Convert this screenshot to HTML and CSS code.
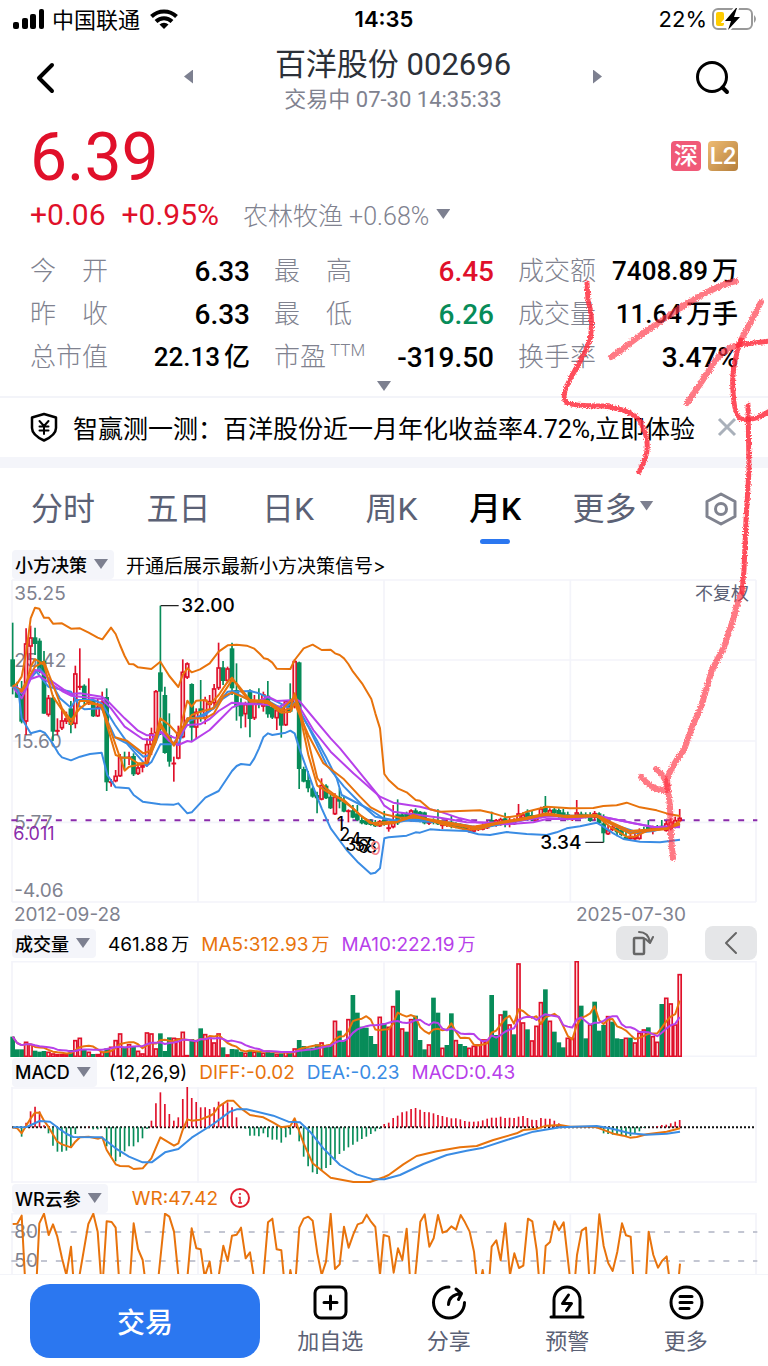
FILE: index.html
```html
<!doctype html>
<html lang="zh-CN">

<head>
  <meta charset="utf-8">
  <meta name="viewport" content="width=device-width, initial-scale=1">
  <title>百洋股份 002696</title>
  <link rel="stylesheet" href="styles.css">
</head>

<body>
  <div class="status">
    <svg width="34" height="20" viewBox="0 0 34 20">
      <rect x="1" y="13" width="6" height="7" rx="2" />
      <rect x="10" y="9" width="6" height="11" rx="2" />
      <rect x="18" y="5" width="6" height="15" rx="2" />
      <rect x="27" y="0" width="5" height="20" rx="2" />
    </svg>
    <span class="carrier">中国联通</span>
    <svg width="28" height="20" viewBox="0 0 28 20">
      <path d="M1.500 7.500A18 18 0 0 1 26.500 7.500" fill="none" stroke="#000" stroke-width="4" />
      <path d="M6 12.500A11.500 11.500 0 0 1 22 12.500" fill="none" stroke="#000" stroke-width="4" />
      <path d="M14 20L9.500 15.500A6.500 6.500 0 0 1 18.500 15.500Z" />
    </svg>
    <span class="time">14:35</span>
    <span class="battery">22%
      <svg width="46" height="24" viewBox="0 0 46 24">
        <rect x="1" y="2" width="39" height="20" rx="5" fill="none" stroke="#999" stroke-width="2" />
        <path d="M42 8q4 4 0 8z" fill="#999" />
        <rect x="4" y="5" width="8" height="14" rx="2" fill="#fc0" />
        <path d="M24 1L13 14h6l-3 9 12-13h-6l3-9z" stroke="#fff" stroke-width="4" />
        <path d="M24 1L13 14h6l-3 9 12-13h-6l3-9z" />
      </svg>
    </span>
  </div>

  <header class="nav">
    <button class="icon-btn" aria-label="返回">
      <svg width="32" height="32" viewBox="0 0 32 32" class="line">
        <path d="M22 3L9 16l13 13" stroke-width="4" />
      </svg>
    </button>
    <button class="icon-btn" aria-label="上一只"><i class="tri left"></i></button>
    <div class="title">
      <h1>百洋股份 002696</h1>
      <p>交易中 07-30 14:35:33</p>
    </div>
    <button class="icon-btn" aria-label="下一只"><i class="tri right"></i></button>
    <button class="icon-btn search" aria-label="搜索">
      <svg width="36" height="36" viewBox="0 0 36 36" class="line">
        <circle cx="17" cy="17" r="14.500" stroke-width="3" />
        <path d="M27.500 27.500L32 32" stroke-width="4" />
      </svg>
    </button>
  </header>

  <section class="quote">
    <div class="price">
      <strong>6.39</strong>
      <span class="badge sz">深</span>
      <span class="badge l2">L2</span>
    </div>
    <div class="change">
      <span class="up">+0.06</span>
      <span class="up">+0.95%</span>
      <span class="sector">农林牧渔 +0.68%</span>
      <i class="tri down"></i>
    </div>
    <dl class="stats">
      <div><dt>今　开</dt><dd>6.33</dd></div>
      <div><dt>最　高</dt><dd class="up">6.45</dd></div>
      <div><dt>成交额</dt><dd class="unit">7408.89<b>万</b></dd></div>
      <div><dt>昨　收</dt><dd>6.33</dd></div>
      <div><dt>最　低</dt><dd class="down-text">6.26</dd></div>
      <div><dt>成交量</dt><dd class="unit">11.64<b>万手</b></dd></div>
      <div><dt>总市值</dt><dd class="unit">22.13<b>亿</b></dd></div>
      <div><dt>市盈<sup>TTM</sup></dt><dd>-319.50</dd></div>
      <div><dt>换手率</dt><dd>3.47%</dd></div>
    </dl>
    <div class="expand"><i class="tri down"></i></div>
  </section>

  <div class="notice">
    <svg width="30" height="30" viewBox="0 0 30 30" class="line">
      <path d="M15 2L27 5.500V16q0 7-12 12.500Q3 23 3 16V5.500Z" stroke-width="2.500" />
      <path d="M10.500 9l4.500 5 4.500-5M15 14v8M10.500 14.500h9M10.500 18.500h9" stroke-width="2" />
    </svg>
    <a href="#">智赢测一测：百洋股份近一月年化收益率4.72%,立即体验</a>
    <button class="icon-btn" aria-label="关闭">
      <svg width="20" height="20" viewBox="0 0 20 20">
        <path d="M2 2l16 16M18 2L2 18" stroke="#a9b0ba" stroke-width="3" />
      </svg>
    </button>
  </div>

  <nav class="tabs">
    <a href="#">分时</a>
    <a href="#">五日</a>
    <a href="#">日K</a>
    <a href="#">周K</a>
    <a href="#" class="active">月K</a>
    <a href="#">更多<i class="tri down small"></i></a>
    <button class="icon-btn" aria-label="设置">
      <svg width="32" height="34" viewBox="0 0 32 34" class="line grey">
        <path d="M16 2L30 9.500V24.500L16 32L2 24.500V9.500Z" stroke-width="3" />
        <circle cx="16" cy="17" r="5.500" stroke-width="3" />
      </svg>
    </button>
  </nav>

  <div class="bar">
    <button class="tag">小方决策<i class="tri down"></i></button>
    <a href="#" class="hint">开通后展示最新小方决策信号&gt;</a>
  </div>
  <!-- chart units: 3 per css pixel -->
  <svg class="chart" id="kline" viewBox="0 12 2304 978">
    <path class="grid" d="M36 15H2268M36 255H2268M36 498H2268M36 742H2268M36 981H2268M36 15V981M594 15V981M1152 15V981M1711 15V981M2268 15V981" />
    <g class="axis">
      <text x="43" y="76">35.25</text>
      <text x="43" y="275">25.42</text>
      <text x="43" y="518">15.60</text>
      <text x="43" y="763">5.77</text>
      <text x="43" y="966">-4.06</text>
    </g>
    <text class="cost" x="40" y="795">6.011</text>
    <text class="adjust" x="2085" y="76">不复权</text>
    <path d="M34 736H2272" stroke="#8a2bab" stroke-width="6" stroke-dasharray="18 26.500" />
    <g id="candles"></g>
    <g id="lines"></g>
    <path d="M482 92h54M1756 802h55" stroke="#222" stroke-width="4" />
    <text class="mark" x="544" y="112">32.00</text>
    <text class="mark" x="1621" y="821">3.34</text>
    <g class="count">
      <text x="1010" y="766">1</text>
      <text x="1018" y="798">2</text>
      <text x="1036" y="829">3</text>
      <text x="1050" y="813">4</text>
      <text x="1063" y="829">5</text>
      <text x="1073" y="835">6</text>
      <text x="1085" y="829">7</text>
      <text x="1098" y="835">8</text>
      <text x="1110" y="841" class="last">9</text>
    </g>
  </svg>
  <div class="dates"><span>2012-09-28</span><span>2025-07-30</span></div>

  <div class="bar tall">
    <button class="tag">成交量<i class="tri down"></i></button>
    <span class="val">461.88<small>万</small></span>
    <span class="val orange">MA5:312.93<small>万</small></span>
    <span class="val purple">MA10:222.19<small>万</small></span>
    <span class="tools">
      <button aria-label="横屏">
        <svg width="24" height="26" viewBox="0 0 24 26" class="line dark">
          <rect x="4" y="8" width="10" height="16" rx="1" stroke-width="2.500" />
          <path d="M9 2Q18 2 20 12M15.500 9l4.500 4 3-6" stroke-width="2" />
        </svg>
      </button>
      <button aria-label="收起">
        <svg width="24" height="26" viewBox="0 0 24 26" class="line dark">
          <path d="M17 3L7 13l10 10" stroke-width="2" />
        </svg>
      </button>
    </span>
  </div>
  <svg class="chart" viewBox="0 108 2304 288">
    <path class="grid" d="M36 110H2268M36 394H2268M36 108V396M594 108V396M1152 108V396M1711 108V396M2268 108V396" />
    <g id="volume"></g>
  </svg>

  <div class="bar">
    <button class="tag">MACD<i class="tri down"></i></button>
    <span class="val">(12,26,9)</span>
    <span class="val orange">DIFF:-0.02</span>
    <span class="val blue">DEA:-0.23</span>
    <span class="val purple">MACD:0.43</span>
  </div>
  <svg class="chart" viewBox="0 486 2304 288">
    <path class="grid" d="M36 489H2268M36 771H2268M36 486V774M594 486V774M1152 486V774M1711 486V774M2268 486V774" />
    <path d="M36 607H2268" stroke="#111" stroke-width="6" stroke-dasharray="6 6" />
    <g id="macd"></g>
  </svg>

  <div class="bar">
    <button class="tag">WR云参<i class="tri down"></i></button>
    <span class="val orange wr">WR:47.42</span>
    <svg width="20" height="20" viewBox="0 0 20 20">
      <circle cx="10" cy="10" r="9" fill="none" stroke="#e02030" stroke-width="2" />
      <path d="M10 5v2M8.500 9.500H10v5M8 15h4" fill="none" stroke="#e02030" stroke-width="1.500" />
    </svg>
  </div>
  <svg class="chart" viewBox="0 864 2304 183">
    <path class="grid" d="M36 866H2268M36 864V1047M594 864V1047M1152 864V1047M1711 864V1047M2268 864V1047" />
    <path d="M34 921H2272M34 1008H2272" stroke="#c3c6d2" stroke-width="6" stroke-dasharray="18 26.500" />
    <g class="axis">
      <text x="43" y="940">80</text>
      <text x="43" y="1027">50</text>
    </g>
    <g id="wr"></g>
  </svg>

  <footer class="actions">
    <button class="trade">交易</button>
    <a href="#">
      <svg width="36" height="36" viewBox="0 0 36 36" class="line">
        <rect x="3" y="3" width="31" height="31" rx="6" stroke-width="3" />
        <path d="M18.500 12v13M12 18.500h13" stroke-width="3" />
      </svg>
      加自选
    </a>
    <a href="#">
      <svg width="36" height="36" viewBox="0 0 36 36" class="line">
        <path d="M18 3A15.500 15.500 0 1 0 33.500 18.500" stroke-width="3" />
        <path d="M17.500 20.500Q18 11 30 9.500M25 5l5.500 4.500-3 6" stroke-width="3" />
      </svg>
      分享
    </a>
    <a href="#">
      <svg width="36" height="36" viewBox="0 0 36 36" class="line">
        <path d="M2 33h32M5 33V16a13 13 0 0 1 26 0V33" stroke-width="3" />
        <path d="M19.500 11l-6 8.500h9l-5 7" stroke-width="3" />
      </svg>
      预警
    </a>
    <a href="#">
      <svg width="36" height="36" viewBox="0 0 36 36" class="line">
        <circle cx="18.500" cy="18.500" r="15.500" stroke-width="3" />
        <path d="M12 12.500h12M12 18.500h12M12 24.500h9" stroke-width="3" />
      </svg>
      更多
    </a>
  </footer>

  <!-- red pen notes on top of everything -->
  <svg class="pen" viewBox="0 0 768 1366">
    <filter id="rough" x="-10%" y="-10%" width="120%" height="120%">
      <feTurbulence type="fractalNoise" baseFrequency=".7" numOctaves="2" result="n" />
      <feDisplacementMap in="SourceGraphic" in2="n" scale="4" xChannelSelector="R" yChannelSelector="G" />
    </filter>
    <g filter="url(#rough)">
      <path d="M587 283L588 300Q593 317 591 333Q590 345 574 372Q560 396 566 402Q570 406 604 406Q634 410 641 423Q651 442 645 459L639 472" />
      <path class="soft" d="M736 281Q711 287 674 312T624 348L611 357" />
      <path class="soft" d="M761 302Q752 320 741 340" />
      <path d="M741 340Q731 368 733 390Q734 415 741 419Q752 422 770 411" />
      <path d="M770 341L738 345" />
      <path class="soft" d="M738 345Q722 349 713 364T687 403" />
      <path d="M748 405L749 470L746 520L744 570L742 592" />
      <path class="soft" d="M741 594Q736 606 734 617L724 647L712 670L701 707L692 727L684 750Q671 766 667 780L670 807L671 837L673 858" />
      <path class="soft" d="M641 777Q654 792 667 790M656 769Q663 773 667 785" />
    </g>
  </svg>

  <script src="chart.js"></script>
</body>

</html>
```
FILE: styles.css
```css
* {
  box-sizing: border-box;
}

body {
  margin: 0;
  position: relative;
  background: #fff;
  color: #000;
  font-family: Roboto, "Noto Sans CJK SC", sans-serif;
  overflow-x: hidden;
}

h1, p, dl, dd {
  margin: 0;
  font-weight: 400;
}

a {
  color: inherit;
  text-decoration: none;
}

button {
  font: inherit;
  color: inherit;
  border: 0;
  padding: 0;
  background: none;
}

svg {
  display: block;
  flex: none;
}

.line {
  fill: none;
  stroke: #000;
  stroke-linecap: round;
  stroke-linejoin: round;
}

.line.grey { stroke: #80838f; }
.line.dark { stroke: #666; }

.tri {
  display: inline-block;
  flex: none;
  width: 14px;
  height: 10px;
  background: #7d8090;
}

.tri.down { clip-path: polygon(0 0, 100% 0, 50% 100%); }
.tri.left { width: 9px; height: 14px; clip-path: polygon(100% 0, 100% 100%, 0 50%); }
.tri.right { width: 9px; height: 14px; clip-path: polygon(0 0, 100% 50%, 0 100%); }
.tri.small { margin-left: 3px; }

.up { color: #e0102a; }
.down-text { color: #078c59; }
.orange { color: #e8730c; }
.purple { color: #b740ea; }
.blue { color: #3a8ce4; }

/* status bar */
.status {
  display: grid;
  grid-template-columns: auto auto 1fr auto 1fr;
  align-items: center;
  height: 38px;
  padding: 0 10px 0 12px;
  font-family: Inter, "Noto Sans CJK SC", sans-serif;
  font-size: 22px;
  position: relative;
}

.carrier {
  margin: 0 10px 2px 6px;
}

.time {
  position: absolute;
  left: 0;
  right: 0;
  text-align: center;
  font-weight: 600;
}

.battery {
  grid-column: 5;
  display: flex;
  align-items: center;
  justify-content: flex-end;
  gap: 5px;
}

/* top navigation */
.nav {
  display: grid;
  grid-template-columns: 154px 9px 1fr 9px 129px;
  align-items: center;
  height: 80px;
  padding: 0 37px 0 30px;
}

.search {
  justify-self: end;
}

.title {
  padding-top: 6px;
  text-align: center;
  color: #2b3038;
}

.title h1 {
  font-size: 31px;
  line-height: 38px;
}

.title p {
  font-size: 22px;
  line-height: 32px;
  color: #80828f;
}

/* quote */
.quote {
  padding: 0 30px;
  border-bottom: 2px solid #f3f4f9;
}

.price {
  display: flex;
  align-items: center;
  gap: 7px;
  height: 76px;
}

.price strong {
  margin-right: auto;
  padding-top: 4px;
  font-size: 66px;
  font-weight: 400;
  line-height: 76px;
  color: #e0102a;
}

.badge {
  width: 30px;
  height: 30px;
  border-radius: 4px;
  color: #fff;
  font-size: 24px;
  font-weight: 500;
  line-height: 30px;
  text-align: center;
}

.sz { background: #f05a78; }
.l2 { background: linear-gradient(135deg, #eebb72, #b57f3c); }

.change {
  display: flex;
  align-items: center;
  height: 42px;
  padding-bottom: 2px;
  gap: 16px;
  font-size: 30px;
}

.sector {
  margin: 0 -9px 0 8px;
  font-size: 25px;
  font-weight: 300;
  color: #80828f;
}

.stats {
  display: grid;
  grid-template-columns: repeat(3, 1fr);
  column-gap: 24px;
  padding-top: 14px;
}

.stats div {
  display: flex;
  justify-content: space-between;
  align-items: center;
  height: 43px;
  font-size: 26px;
  line-height: 43px;
}

.stats dt {
  color: #80828f;
  font-weight: 300;
}

.stats sup {
  margin-left: 4px;
  font-size: 17px;
  line-height: 17px;
}

.stats dd {
  font-size: 28px;
  font-weight: 500;
  white-space: nowrap;
}

.stats .unit {
  font-size: 26px;
}

.stats b {
  margin-left: 4px;
  font-weight: 500;
}

.expand {
  height: 17px;
  text-align: center;
  line-height: 14px;
}

/* notice */
.notice {
  display: flex;
  align-items: center;
  height: 70px;
  padding: 0 31px 2px 29px;
  border-bottom: 11px solid #f4f5fa;
  font-size: 25px;
}

.notice a {
  flex: 1;
  margin-left: 14px;
  white-space: nowrap;
}

/* period tabs */
.tabs {
  display: flex;
  align-items: center;
  justify-content: space-between;
  height: 81px;
  padding: 0 31px;
  font-size: 32px;
  color: #5b6175;
}

.tabs a {
  display: flex;
  align-items: center;
  height: 81px;
  padding-bottom: 6px;
}

.tabs .active {
  position: relative;
  color: #000;
  font-weight: 500;
}

.tabs .active::after {
  content: "";
  position: absolute;
  bottom: 5px;
  left: 50%;
  width: 30px;
  height: 5px;
  margin-left: -15px;
  border-radius: 3px;
  background: #2b77f0;
}

/* indicator rows */
.bar {
  display: flex;
  align-items: center;
  height: 30px;
  padding: 0 11px 0 12px;
  font-family: Inter, "Noto Sans CJK SC", sans-serif;
  font-size: 19px;
  white-space: nowrap;
}

.bar.tall {
  height: 36px;
}

.tag {
  display: flex;
  align-items: center;
  gap: 7px;
  height: 29px;
  margin-right: 12px;
  padding: 0 6px 0 3px;
  border-radius: 4px;
  background: #f4f5fa;
  font-size: 18px;
  font-weight: 500;
}

.val {
  margin-right: 12px;
}

.val small {
  margin-left: 3px;
  font-size: 18px;
}

.wr {
  margin-left: 12px;
}

.tools {
  display: flex;
  gap: 37px;
  margin-left: auto;
}

.tools button {
  display: flex;
  align-items: center;
  justify-content: center;
  width: 52px;
  height: 34px;
  border-radius: 8px;
  background: #e5e6e8;
}

.dates {
  display: flex;
  justify-content: space-between;
  height: 20px;
  padding: 0 82px 0 14px;
  font-family: Inter, sans-serif;
  font-size: 19px;
  line-height: 20px;
  color: #80828f;
}

/* charts */
.chart {
  width: 100%;
  height: auto;
}

.chart text {
  font-family: Inter, "Noto Sans CJK SC", sans-serif;
  font-size: 54px;
}

.grid {
  fill: none;
  stroke: #f3f4fa;
  stroke-width: 5;
}

.axis { fill: #80828f; }
.cost { fill: #8a2bab; }
.adjust { fill: #5b6175; }
.mark { font-weight: 500; }
.count .last { fill: #f58088; }

.chart .axis text,
.chart .mark {
  font-size: 57px;
}

.chart polyline {
  fill: none;
  stroke-width: 6;
  stroke-linejoin: round;
}

/* bottom actions */
.actions {
  display: flex;
  align-items: center;
  height: 92px;
  padding: 0 23px 0 30px;
  border-top: 1px solid #f3f4f9;
}

.trade {
  flex: none;
  width: 230px;
  height: 74px;
  margin-right: 11px;
  border-radius: 20px;
  background: #2b77f0;
  color: #fff;
  font-size: 28px;
  font-weight: 500;
}

.actions a {
  flex: 1;
  display: flex;
  flex-direction: column;
  align-items: center;
  gap: 6px;
  color: #5b6175;
  font-size: 22px;
  line-height: 32px;
}

.pen {
  position: absolute;
  top: 0;
  left: 0;
  width: 100%;
  pointer-events: none;
}

.pen path {
  fill: none;
  stroke: #ff3040;
  stroke-opacity: .85;
  stroke-width: 5;
  stroke-linecap: round;
}

.pen .soft {
  stroke-opacity: .65;
  stroke-width: 6;
}
```
FILE: chart.js
```js
const id = document.getElementById.bind(document)

const RED = '#e0102a'
const GREEN = '#078c59'
const ORANGE = '#e8730c'
const PURPLE = '#b740ea'
const BLUE = '#3a8ce4'

const x = (i) => 38 + 13.43 * i

// colour, high, body top, body bottom, low
const candles = `g143,253,335,358 g320,345,368,368 g318,345,440,445 r160,205,440,480 r152,187,215,290
g158,187,207,240 g190,197,290,295 g228,258,416,416 r360,368,420,425 g360,368,470,498
r430,465,469,480 r405,436,460,465 r410,430,440,447 g378,400,450,475 r272,295,447,460
r220,333,338,345 g328,332,378,390 r310,375,385,390 g370,375,424,426 r370,395,424,426
r350,380,400,405 g340,366,622,648 r612,619,622,635 r585,602,619,622 r537,545,604,606
g530,545,550,585 r530,545,548,570 g535,543,598,603 r565,577,597,600 r565,570,578,592
r490,507,568,575 r458,475,510,540 r345,348,475,500 g92,292,350,480 g335,360,534,536
g415,480,560,575 r545,563,567,620 r452,472,551,553 r253,290,487,490 r262,265,308,312
g325,327,458,500 r400,410,458,492 g315,400,410,440 r365,374,430,448 r360,378,390,410
r327,340,385,395 r203,277,340,345 g258,277,318,330 r275,280,318,325 g203,220,340,360
g265,345,395,437 g370,385,424,460 r380,387,418,457 g343,346,432,487 r360,385,430,435
g340,375,390,400 r350,358,395,410 g318,362,418,428 g385,395,428,432 r395,405,430,465
g390,400,452,488 r375,378,451,453 g325,378,410,412 r252,258,390,400 g260,262,582,642
g575,582,620,622 g588,615,640,652 g635,640,665,668 g650,660,670,715 r610,630,674,676
g628,632,670,672 g655,665,700,702 r655,665,718,720 g640,665,680,700 g665,680,710,712
r703,706,710,742 g690,706,728,730 g690,715,735,738 g725,735,745,748 g730,736,748,750
g732,738,750,752 g735,745,754,756 r735,738,754,756 g708,735,750,752 r745,757,760,770
r690,740,757,760 g673,718,745,750 g712,718,730,735 g710,715,732,735 r703,706,738,740
g700,706,730,735 g708,710,738,742 g710,712,745,748 r735,738,746,750 g730,740,744,748
g703,735,748,750 r738,748,752,762 r733,742,752,756 g723,740,755,760 g742,745,758,760
g745,750,760,762 g748,752,765,768 r750,755,770,774 r752,758,770,773 r750,752,765,768
r745,750,764,766 r738,742,760,762 g710,735,752,755 r732,735,750,755 r728,732,750,752
g713,730,750,757 r728,735,748,757 r730,735,748,750 r687,715,735,738 r712,718,730,733
g703,712,735,738 g708,720,735,738 r722,728,738,740 r695,700,728,730 g663,693,712,715
r700,705,720,724 g698,703,715,720 g700,705,725,728 g702,712,728,730 g710,718,732,736
r722,727,735,738 r675,712,722,730 g710,716,722,726 g712,718,728,730 g712,720,738,740
r708,714,728,736 g712,715,745,748 g718,745,775,802 r750,765,778,780 r748,755,765,768
g750,758,772,784 g755,765,780,784 g770,785,793,795 r775,783,792,795 r775,785,793,796
r760,775,792,794 g755,762,770,774 g735,755,762,768 r752,757,768,778 g750,756,762,766
g735,752,760,765 r738,745,768,770 r730,740,762,766 r725,735,755,760 r702,728,738,742`

// colour, top of the bar
const volume = `g335 g373 g373 r350 r357 g377 g380 g378 r380 r385 r387 r387 r387 g375 r345 r338 g373 r380 g387 r387
r380 g370 r365 r345 r325 g365 r357 g365 r377 r385 r322 r325 r370 g325 g378 g337 r338 r340 r320 r390
g342 r347 g310 r327 r338 r352 r325 g367 r388 g372 g373 g380 r383 g375 r380 g378 r383 g377 g383 r386
g385 r380 g383 r370 g345 g363 g370 g368 g358 r352 g360 g358 r287 g317 g345 r282 g210 g263 g305 g308
g333 g357 r275 g295 r305 r243 g196 r310 g320 r282 g272 g345 g373 r358 g218 g263 r368 g360 g265 r345
g357 g363 r368 r362 r358 r343 r343 g210 g330 r268 g257 r298 g328 r115 r292 g313 r346 r302 r231 g193
r287 g320 g352 g367 r338 r338 r108 g242 g340 r298 g230 g317 g300 r273 g290 g340 g342 r338 g338 r352
r323 r313 g307 r333 r350 g237 r218 r235 r298 r147`

const macd = [0, -3, -28, 14, 48, 62, 48, 6, -18, -55, -73, -73, -70, -62, -20, 0, 0, 2, -6, -6,
  0, -57, -90, -102, -88, -72, -57, -57, -45, -33, -5, 20, 72, 105, 70, 40, 20, 30, 85, 121,
  88, 76, 60, 60, 55, 60, 77, 70, 75, 60, 30, 0, -4, -25, -25, -27, -18, -30, -37, -37,
  -46, -30, -22, 22, -42, -88, -117, -135, -140, -130, -122, -113, -95, -80, -70, -60, -52, -43, -35, -28,
  -20, -12, -5, 10, 14, 28, 35, 45, 48, 55, 58, 53, 46, 45, 42, 37, 34, 30, 27, 27,
  24, 19, 17, 17, 18, 21, 26, 29, 29, 32, 28, 29, 28, 32, 34, 28, 23, 22, 28, 26,
  26, 20, 12, 6, 3, 2, 2, 2, 1, 1, 0, -4, -18, -20, -22, -23, -25, -28, -26, -20,
  -12, -2, 0, 1, 4, 7, 8, 12, 17, 22]

const lines = [
  // blue averages
  [BLUE, '38,335 65,350 92,310 118,280 145,310 180,370 213,398 226,375 280,375 305,385 345,450 380,500 430,545 450,540 481,470 520,508 548,460 562,430 589,428 616,415 642,400 683,350 700,348 720,360 750,378 804,378 844,400 884,382 925,455 980,570 1032,635 1086,690 1126,725 1180,735 1320,742 1440,760 1520,745 1640,722 1790,722 1830,745 1900,768 1960,766 2040,752'],
  [BLUE, '38,335 65,345 105,285 145,335 213,350 240,395 254,403 305,400 345,487 380,505 440,573 455,560 481,508 535,508 562,440 616,420 670,370 700,350 750,348 777,355 830,380 871,400 884,385 950,495 980,550 1010,610 1025,660 1112,705 1153,732 1200,740 1240,732 1320,738 1440,758 1520,740 1640,718 1710,730 1790,720 1850,755 1900,775 1960,768 2040,748'],
  [PURPLE, '38,333 52,337 65,355 105,285 118,287 160,322 200,350 213,357 240,355 305,365 320,375 374,430 414,467 441,481 468,480 481,470 522,488 535,488 562,450 600,448 629,432 656,408 696,383 750,386 790,372 804,365 830,378 871,376 884,370 898,378 992,490 1020,520 1130,655 1153,692 1180,710 1240,718 1320,728 1400,742 1520,743 1640,725 1790,722 1880,740 1960,757 2040,752'],
  [PURPLE, '38,335 65,370 92,312 118,303 186,348 213,362 305,372 333,400 374,455 428,492 454,495 481,470 508,498 535,510 562,498 575,500 629,465 656,438 696,398 720,387 790,388 840,395 884,372 898,395 940,465 992,530 1060,595 1140,665 1180,683 1260,695 1320,710 1380,730 1430,742 1520,748 1600,742 1640,732 1720,732 1790,722 1830,730 1900,745 1960,755 2040,757'],
  // orange averages
  [ORANGE, '38,335 65,350 78,330 92,275 105,252 118,260 132,270 159,365 186,405 213,448 226,420 239,378 266,378 305,395 347,540 360,545 374,587 387,575 428,567 441,560 468,480 481,430 508,450 535,480 562,377 575,395 589,377 616,375 629,388 656,360 683,320 696,308 723,348 750,380 800,380 840,410 871,400 884,355 898,400 925,500 952,610 978,640 1005,660 1032,680 1059,700 1086,725 1112,745 1153,742 1193,740 1240,720 1320,746 1400,764 1440,762 1500,742 1580,728 1640,715 1690,722 1790,722 1830,755 1880,785 1905,785 1940,768 2000,762 2040,738'],
  [ORANGE, '38,335 65,345 105,275 132,260 159,330 186,400 213,435 240,400 260,385 305,390 333,470 360,548 387,548 414,565 441,565 468,500 481,445 522,512 548,460 575,420 602,410 640,400 683,335 696,315 710,325 750,375 804,378 844,405 884,365 898,410 925,540 952,632 1005,665 1032,675 1080,720 1126,750 1180,745 1240,725 1320,742 1420,760 1500,745 1580,732 1640,718 1700,727 1790,724 1830,745 1890,776 1940,765 2000,760 2040,745'],
  [ORANGE, '345,487 380,497 430,535 450,528 481,455 522,508 562,430 616,430 642,415 670,365 696,352 750,375 804,385 844,413 871,410 884,385 925,480 970,565 1032,613 1080,665 1112,697 1153,718 1200,728 1260,728 1320,738 1420,755 1500,742 1580,728 1640,720 1700,724 1790,720 1830,740 1890,768 1940,764 2000,762 2040,748'],
  // bands
  [BLUE, '38,335 55,345 65,430 92,475 120,467 135,474 159,507 175,535 186,547 213,556 240,545 270,537 305,533 322,600 347,637 387,640 401,660 428,680 481,688 522,689 535,685 562,715 575,712 616,668 656,648 696,588 710,573 723,567 750,570 763,550 777,520 790,487 804,475 817,480 857,473 871,467 884,475 898,520 938,632 965,700 992,760 1040,825 1072,860 1112,896 1126,893 1140,880 1153,790 1166,787 1220,782 1247,772 1260,773 1290,763 1320,765 1400,768 1435,778 1470,780 1520,771 1580,777 1640,780 1670,772 1700,760 1740,754 1790,743 1810,755 1840,775 1870,792 1920,800 1980,802 2010,798 2040,794'],
  [ORANGE, '38,335 52,325 65,305 78,235 92,130 105,98 118,101 132,128 146,128 159,146 186,145 213,161 240,160 266,173 293,188 307,193 333,158 347,177 360,210 374,243 387,267 401,268 414,277 454,282 481,260 508,303 535,336 548,300 562,280 575,292 600,283 629,265 656,230 683,211 710,209 740,212 763,221 780,237 792,250 804,253 817,263 830,281 871,282 884,255 911,220 938,209 965,225 992,224 1005,235 1019,240 1032,250 1045,267 1059,290 1086,325 1114,372 1126,415 1140,460 1153,597 1166,615 1193,640 1220,652 1247,675 1260,677 1290,703 1320,710 1440,706 1480,715 1520,727 1555,722 1580,710 1640,695 1710,700 1780,699 1810,693 1850,691 1880,683 1920,697 1970,706 2010,718 2040,723']
]

const diff = '38,607 52,610 65,625 92,580 105,563 119,563 132,587 145,605 172,650 186,658 213,667 226,650 240,637 266,635 295,641 307,637 320,675 347,718 360,723 387,724 401,732 428,730 454,700 481,637 522,662 535,655 548,615 562,583 575,587 600,584 629,573 640,567 656,545 683,527 700,527 723,550 750,570 790,577 820,593 844,607 871,603 884,580 898,620 911,655 938,715 992,758 1060,771 1110,771 1153,756 1166,750 1210,718 1250,693 1310,679 1380,667 1430,663 1480,645 1550,625 1570,615 1610,611 1640,602 1680,600 1710,605 1770,605 1790,607 1840,626 1870,632 1890,638 1910,636 1940,628 2000,620 2040,610'
const dea = '38,607 80,606 119,588 150,590 172,607 200,627 220,636 305,637 347,670 387,695 428,712 455,712 495,682 535,672 575,638 640,597 690,560 710,553 740,553 820,572 865,590 900,592 930,620 970,670 1020,720 1070,748 1120,763 1153,763 1200,750 1270,717 1340,690 1400,677 1450,668 1520,645 1600,620 1680,607 1790,603 1830,610 1890,625 1940,629 2000,626 2040,620'

// values below the visible range run off the bottom edge
const wr = '38,897 52,896 65,872 75,1060 110,1060 118,895 132,866 146,930 159,898 172,935 186,1000 199,1050 213,965 220,1060 237,1060 265,897 280,866 293,920 303,1060 309,1060 320,889 335,891 347,908 357,1060 390,1060 401,895 414,972 428,1005 435,1060 475,1060 495,866 508,875 522,920 536,1060 562,1060 575,910 589,970 602,973 614,1055 629,1010 636,1060 655,1060 670,962 683,1008 696,932 710,929 723,908 737,1000 750,982 762,1060 790,1060 804,892 817,881 830,973 844,976 852,1060 868,1060 871,1035 876,1060 887,1060 898,908 911,881 925,875 938,887 952,985 965,1050 978,1010 992,866 1005,1032 1019,1018 1032,905 1046,968 1060,928 1073,898 1087,893 1100,869 1113,890 1126,906 1140,1050 1151,930 1167,935 1181,1043 1194,970 1207,1005 1220,911 1230,1060 1245,1060 1261,890 1274,868 1288,965 1301,940 1314,870 1328,923 1341,918 1354,904 1368,914 1382,870 1395,892 1409,920 1422,980 1430,1060 1443,1060 1448,1035 1452,1060 1468,1060 1475,965 1489,946 1502,1006 1516,895 1530,1050 1543,985 1557,1029 1570,1022 1584,881 1597,889 1610,975 1617,1060 1630,1060 1637,963 1650,951 1663,889 1677,916 1691,892 1710,1060 1725,1060 1731,990 1745,917 1758,908 1768,1060 1782,1060 1786,1020 1798,868 1811,963 1825,1015 1838,1038 1852,980 1866,895 1878,931 1892,935 1900,1060 1938,1060 1946,920 1960,990 1974,1028 1986,1008 2000,994 2008,1060 2036,1060 2040,1016'

const polyline = (color, points) => `<polyline stroke="${color}" points="${points}"/>`

const bar = (cx, top, bottom, up) => up
  ? `<rect x="${cx - 4.5}" y="${top + 2}" width="9" height="${Math.max(bottom - top - 4, 1)}" fill="#fbdde1" stroke="${RED}" stroke-width="5"/>`
  : `<rect x="${cx - 7}" y="${top}" width="14" height="${bottom - top}" fill="${GREEN}"/>`

id('candles').innerHTML = candles.split(/\s+/).map((c, i) => {
  const up = c[0] === 'r'
  const [high, top, bottom, low] = c.slice(1).split(',').map(Number)
  return `<path d="M${x(i)} ${high}V${low}" stroke="${up ? RED : GREEN}" stroke-width="5"/>` + bar(x(i), top, bottom, up)
}).join('')

id('lines').innerHTML = lines.map((l) => polyline(l[0], l[1])).join('')

const bars = volume.split(/\s+/)
const tops = bars.map((b) => Number(b.slice(1)))

function average(n) {
  return tops.map((t, i) => {
    const part = tops.slice(Math.max(0, i - n + 1), i + 1)
    return x(i) + ',' + part.reduce((a, b) => a + b, 0) / part.length
  }).join(' ')
}

id('volume').innerHTML = bars.map((b, i) => bar(x(i), tops[i], 396, b[0] === 'r')).join('') +
  polyline(ORANGE, average(5)) + polyline(PURPLE, average(10))

id('macd').innerHTML = macd.map((v, i) =>
  `<path d="M${x(i)} 607v${-v}" stroke="${v > 0 ? RED : GREEN}" stroke-width="5"/>`
).join('') + polyline(ORANGE, diff) + polyline(BLUE, dea)

id('wr').innerHTML = polyline(ORANGE, wr)
```
